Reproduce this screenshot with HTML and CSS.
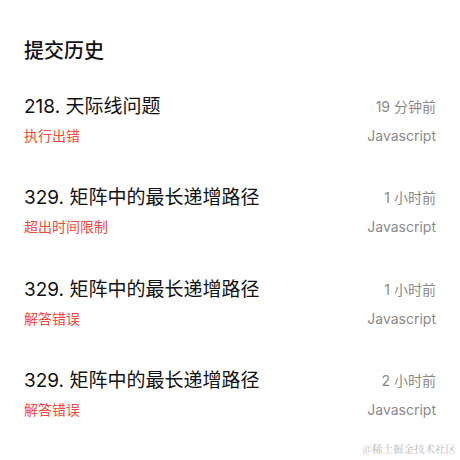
FILE: index.html
```html
<!DOCTYPE html>
<html lang="zh-CN">
<head>
<meta charset="UTF-8" />
<title>提交历史</title>
<link rel="stylesheet" href="styles.css">
</head>
<body>
  <div class="page">
    <h1 class="page-title">提交历史</h1>

    <ul class="submit-list">
      <li class="submit-item">
        <div class="row">
          <span class="problem">218. 天际线问题</span>
          <span class="meta">19 分钟前</span>
        </div>
        <div class="row">
          <span class="status">执行出错</span>
          <span class="meta">Javascript</span>
        </div>
      </li>
      <li class="submit-item">
        <div class="row">
          <span class="problem">329. 矩阵中的最长递增路径</span>
          <span class="meta">1 小时前</span>
        </div>
        <div class="row">
          <span class="status">超出时间限制</span>
          <span class="meta">Javascript</span>
        </div>
      </li>
      <li class="submit-item">
        <div class="row">
          <span class="problem">329. 矩阵中的最长递增路径</span>
          <span class="meta">1 小时前</span>
        </div>
        <div class="row">
          <span class="status">解答错误</span>
          <span class="meta">Javascript</span>
        </div>
      </li>
      <li class="submit-item">
        <div class="row">
          <span class="problem">329. 矩阵中的最长递增路径</span>
          <span class="meta">2 小时前</span>
        </div>
        <div class="row">
          <span class="status">解答错误</span>
          <span class="meta">Javascript</span>
        </div>
      </li>
    </ul>
  </div>

  <div class="watermark">@稀土掘金技术社区</div>
</body>
</html>
```

FILE: styles.css
```css
body {
  margin: 0;
  background: #fff;
  color: #111;
  font-family: 'Inter', 'Noto Sans CJK SC', sans-serif;
  height: 100vh;
  position: relative;
  overflow: hidden;
}

.page {
  padding: 37px 24px 0 24px;
}

.page-title {
  margin: 0;
  font-size: 20px;
  font-weight: 500;
  line-height: 28px;
}

/* 提交记录列表 */
.submit-list {
  list-style: none;
  margin: 30px 0 0 0;
  padding: 0;
}
.submit-item {
  display: flex;
  flex-direction: column;
  gap: 5px;
  height: 91.4px;
}
.row {
  display: flex;
  justify-content: space-between;
  align-items: center;
}
.problem {
  font-size: 19px;
  line-height: 24px;
}
.status {
  font-size: 14px;
  line-height: 24px;
  color: #f4493c;
}
.meta {
  font-size: 14px;
  line-height: 24px;
  color: #8a8a8a;
}

.watermark {
  position: absolute;
  right: 4px;
  bottom: 4px;
  font-size: 10.5px;
  color: #b8b8b8;
  font-family: 'Noto Serif CJK SC', 'Noto Sans CJK SC', serif;
}
```
